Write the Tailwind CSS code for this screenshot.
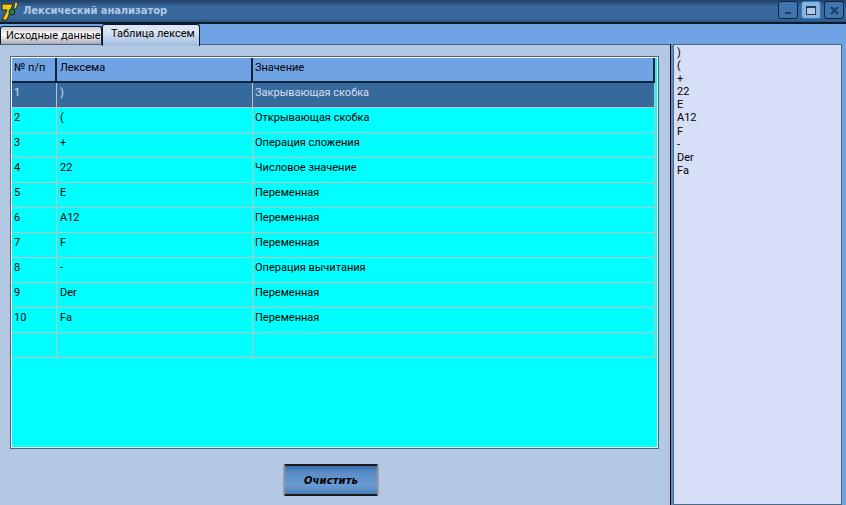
<!DOCTYPE html>
<html lang="en">
<head>
    <meta charset="UTF-8">
    <title>Лексический анализатор</title>
    <script src="https://cdn.jsdelivr.net/npm/@tailwindcss/browser@4"></script>
</head>
<body class="w-[846px] h-[505px] overflow-hidden bg-[#6fa3e3] font-['Roboto',sans-serif] text-[11px] text-black">
    <!-- Title bar -->
    <div class="h-[24px] flex items-start bg-[linear-gradient(#1f3f66,#39689c_30%,#39689c_80%,#2c5582)] border-b-2 border-[#0c1a2c]">
        <svg class="w-[18px] h-[20px] ml-[1px] mt-[1px]" viewBox="0 0 18 20">
            <path d="M1 3h11l-6 16H1l5-10H1z" fill="#e8c91c" stroke="#2a2000" stroke-width="1"/>
            <circle cx="11" cy="11" r="3" fill="#2f7d3a" stroke="#123" stroke-width="1"/>
            <path d="M14 1l3 1-2 6-2-1z" fill="#f2dc3a" stroke="#2a2000" stroke-width="0.7"/>
        </svg>
        <span class="ml-[4px] mt-[3px] font-['DejaVu_Sans',sans-serif] font-bold text-[10px] text-[#b3c8e3] leading-[16px] tracking-[-0.08px]">Лексический анализатор</span>
        <div class="ml-auto mr-[2px] mt-[1px] flex gap-[3px]">
            <div class="w-[20px] h-[18px] rounded-[3px] border border-[#0c2340] bg-[#3f74ad] flex items-end justify-center pb-[4px]"><div class="w-[6px] h-[2px] bg-[#1c3f68]"></div></div>
            <div class="w-[20px] h-[18px] rounded-[3px] border border-[#1f7fd0] bg-[#8fb2da] flex items-center justify-center"><div class="w-[10px] h-[9px] border border-[#1c3f68] border-t-2 bg-[#b3c8e3]"></div></div>
            <div class="w-[20px] h-[18px] rounded-[3px] border border-[#0c2340] bg-[#3f74ad] flex items-center justify-center">
                <svg class="w-[9px] h-[9px]" viewBox="0 0 9 9"><path d="M1 1l7 7M8 1l-7 7" stroke="#1c3f68" stroke-width="2"/></svg>
            </div>
        </div>
    </div>

    <!-- Tabs -->
    <div class="h-[20px] flex items-end relative whitespace-nowrap">
        <div class="w-[102px] h-[18px] rounded-t-[3px] border border-b-0 border-[#0c1a2c] bg-[linear-gradient(#c8c8d0,#ffffff_45%,#a9a9b6)] pl-[5px] leading-[18px]">Исходные данные</div>
        <div class="absolute left-[102px] top-0 w-[98px] h-[22px] rounded-t-[3px] border border-b-0 border-[#0c1a2c] bg-[linear-gradient(#dbe5f3,#dbe5f3_30%,#9fbce0)] pl-[8px] leading-[18px]">Таблица лексем</div>
    </div>

    <div class="flex h-[461px]">
        <!-- Left panel -->
        <div class="w-[670px] bg-[#b3c8e3] border-t border-[#4a6080] flex flex-col items-start pt-[11px] pl-[10px]">
            <div class="w-[649px] h-[393px] border border-[#4f6478]">
                <div class="h-full border border-white bg-[#00ffff] pr-[2px]">
                    <div class="flex h-[25px] bg-[#6fa3e3] border-b-2 border-[#0c2340] leading-[20px]">
                        <div class="w-[45px] pl-[2px] border-r-2 border-[#0c2340]">№ п/п</div>
                        <div class="w-[196px] pl-[3px] border-r-2 border-[#0c2340]">Лексема</div>
                        <div class="flex-1 pl-[2px] border-r-2 border-[#0c2340]">Значение</div>
                    </div>
                    <div class="flex h-[25px] leading-[20px] bg-[#366a9c] text-[#d7dff7] border-b border-[#c0c0c0]">
                        <div class="w-[45px] pl-[2px] border-r border-[#c0c0c0]">1</div><div class="w-[196px] pl-[3px] border-r border-[#c0c0c0]">)</div><div class="flex-1 pl-[2px] border-r border-[#c0c0c0]">Закрывающая скобка</div>
                    </div>
                    <div class="flex h-[25px] leading-[20px] border-b border-[#c0c0c0]">
                        <div class="w-[45px] pl-[2px] border-r border-[#c0c0c0]">2</div><div class="w-[196px] pl-[3px] border-r border-[#c0c0c0]">(</div><div class="flex-1 pl-[2px] border-r border-[#c0c0c0]">Открывающая скобка</div>
                    </div>
                    <div class="flex h-[25px] leading-[20px] border-b border-[#c0c0c0]">
                        <div class="w-[45px] pl-[2px] border-r border-[#c0c0c0]">3</div><div class="w-[196px] pl-[3px] border-r border-[#c0c0c0]">+</div><div class="flex-1 pl-[2px] border-r border-[#c0c0c0]">Операция сложения</div>
                    </div>
                    <div class="flex h-[25px] leading-[20px] border-b border-[#c0c0c0]">
                        <div class="w-[45px] pl-[2px] border-r border-[#c0c0c0]">4</div><div class="w-[196px] pl-[3px] border-r border-[#c0c0c0]">22</div><div class="flex-1 pl-[2px] border-r border-[#c0c0c0]">Числовое значение</div>
                    </div>
                    <div class="flex h-[25px] leading-[20px] border-b border-[#c0c0c0]">
                        <div class="w-[45px] pl-[2px] border-r border-[#c0c0c0]">5</div><div class="w-[196px] pl-[3px] border-r border-[#c0c0c0]">E</div><div class="flex-1 pl-[2px] border-r border-[#c0c0c0]">Переменная</div>
                    </div>
                    <div class="flex h-[25px] leading-[20px] border-b border-[#c0c0c0]">
                        <div class="w-[45px] pl-[2px] border-r border-[#c0c0c0]">6</div><div class="w-[196px] pl-[3px] border-r border-[#c0c0c0]">A12</div><div class="flex-1 pl-[2px] border-r border-[#c0c0c0]">Переменная</div>
                    </div>
                    <div class="flex h-[25px] leading-[20px] border-b border-[#c0c0c0]">
                        <div class="w-[45px] pl-[2px] border-r border-[#c0c0c0]">7</div><div class="w-[196px] pl-[3px] border-r border-[#c0c0c0]">F</div><div class="flex-1 pl-[2px] border-r border-[#c0c0c0]">Переменная</div>
                    </div>
                    <div class="flex h-[25px] leading-[20px] border-b border-[#c0c0c0]">
                        <div class="w-[45px] pl-[2px] border-r border-[#c0c0c0]">8</div><div class="w-[196px] pl-[3px] border-r border-[#c0c0c0]">-</div><div class="flex-1 pl-[2px] border-r border-[#c0c0c0]">Операция вычитания</div>
                    </div>
                    <div class="flex h-[25px] leading-[20px] border-b border-[#c0c0c0]">
                        <div class="w-[45px] pl-[2px] border-r border-[#c0c0c0]">9</div><div class="w-[196px] pl-[3px] border-r border-[#c0c0c0]">Der</div><div class="flex-1 pl-[2px] border-r border-[#c0c0c0]">Переменная</div>
                    </div>
                    <div class="flex h-[25px] leading-[20px] border-b border-[#c0c0c0]">
                        <div class="w-[45px] pl-[2px] border-r border-[#c0c0c0]">10</div><div class="w-[196px] pl-[3px] border-r border-[#c0c0c0]">Fa</div><div class="flex-1 pl-[2px] border-r border-[#c0c0c0]">Переменная</div>
                    </div>
                    <div class="flex h-[25px] leading-[20px] border-b border-[#c0c0c0]">
                        <div class="w-[45px] pl-[2px] border-r border-[#c0c0c0]"></div><div class="w-[196px] pl-[3px] border-r border-[#c0c0c0]"></div><div class="flex-1 pl-[2px] border-r border-[#c0c0c0]"></div>
                    </div>
                </div>
            </div>
            <button class="mt-[15px] ml-[273px] w-[96px] h-[32px] rounded-[3px] border-y-2 border-x-2 border-y-[#1a1a1a] border-x-[#9a9a9a] bg-[linear-gradient(#3a6ea8,#5b8ec8_25%,#6a9ad0_70%,#4a7eb8)] font-['DejaVu_Sans',sans-serif] italic font-bold text-[10px] tracking-[0.1px] text-black">Очистить</button>
        </div>
        <!-- Right panel -->
        <div class="w-[3px] bg-[#5b8ec8] border-l border-black"></div>
        <div class="w-[169px] h-full border border-[#4a6a8a] bg-[#d7dff7] pl-[3px] pt-[1px] leading-[13.1px]">
            <div>)</div><div>(</div><div>+</div><div>22</div><div>E</div><div>A12</div><div>F</div><div>-</div><div>Der</div><div>Fa</div>
        </div>
        <div class="flex-1 bg-[#6fa3e3]"></div>
    </div>
</body>
</html>
